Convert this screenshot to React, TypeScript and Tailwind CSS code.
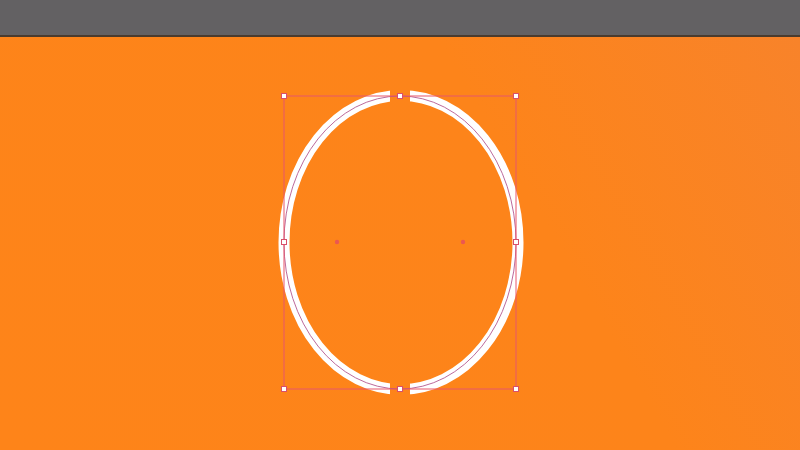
import React from "react";

export default function App() {
  const oy = 37;
  const cx = 400;
  const cy = 242.5 - oy;
  const handles: [number, number][] = [
    [284, 96], [400, 96], [516, 96],
    [284, 242], [516, 242],
    [284, 389], [400, 389], [516, 389],
  ];
  return (
    <div className="w-[800px] h-[450px] flex flex-col overflow-hidden">
      <div className="h-[37px] bg-[#636163] border-b-2 border-[#4a3b2e] shrink-0" />
      <div className="flex-1 bg-[linear-gradient(60deg,#fe8419_0%,#fd841a_65%,#f8832a_100%)]">
        <svg width="800" height="413" viewBox="0 0 800 413" className="block">
          <defs>
            <mask id="gap">
              <rect x="0" y="0" width="800" height="413" fill="white" />
              <rect x="390" y="0" width="20" height="413" fill="black" />
            </mask>
          </defs>
          <g mask="url(#gap)">
            <ellipse cx={401} cy={cy} rx={117} ry={147} fill="none" stroke="#ffffff" strokeWidth={11} />
          </g>
          <ellipse cx={cx} cy={cy} rx={116} ry={146.5} fill="none" stroke="#b0508a" strokeWidth={1} opacity={0.85} />
          <rect x={284} y={96 - oy} width={232} height={293} fill="none" stroke="#e8566a" strokeWidth={1} />
          {handles.map(([x, y], i) => (
            <rect key={i} x={x - 2.5} y={y - oy - 2.5} width={5} height={5} fill="#ffffff" stroke="#d9506a" strokeWidth={1} />
          ))}
          <circle cx={337} cy={242 - oy} r={2.2} fill="#e8505a" opacity={0.85} />
          <circle cx={463} cy={242 - oy} r={2.2} fill="#e8505a" opacity={0.85} />
        </svg>
      </div>
    </div>
  );
}
